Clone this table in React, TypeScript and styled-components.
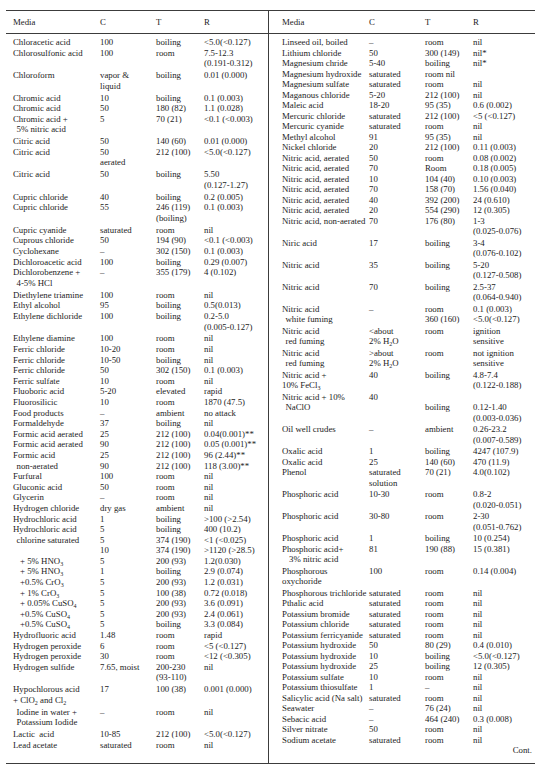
import * as React from "react";
import styled, { createGlobalStyle } from "styled-components";

const GlobalStyle = createGlobalStyle`
  html, body {
    margin: 0;
    padding: 0;
    background: #fff;
  }
  body {
    font-family: "Liberation Serif", "Times New Roman", serif;
    color: #1c1c1c;
  }
`;

type Row = [string, string, string, string];

// "\n" breaks a cell into lines, a leading "~" indents a line, "_3" is a subscript
const leftRows: Row[] = [
  ["Chloracetic acid", "100", "boiling", "<5.0(<0.127)"],
  ["Chlorosulfonic acid", "100", "room", "7.5-12.3\n(0.191-0.312)"],
  ["Chloroform", "vapor &\nliquid", "boiling", "0.01 (0.000)"],
  ["Chromic acid", "10", "boiling", "0.1 (0.003)"],
  ["Chromic acid", "50", "180 (82)", "1.1 (0.028)"],
  ["Chromic acid +\n~5% nitric acid", "5", "70 (21)", "<0.1 (<0.003)"],
  ["Citric acid", "50", "140 (60)", "0.01 (0.000)"],
  ["Citric acid", "50\naerated", "212 (100)", "<5.0(<0.127)"],
  ["Citric acid", "50", "boiling", "5.50\n(0.127-1.27)"],
  ["Cupric chloride", "40", "boiling", "0.2 (0.005)"],
  ["Cupric chloride", "55", "246 (119)\n(boiling)", "0.1 (0.003)"],
  ["Cupric cyanide", "saturated", "room", "nil"],
  ["Cuprous chloride", "50", "194 (90)", "<0.1 (<0.003)"],
  ["Cyclohexane", "–", "302 (150)", "0.1 (0.003)"],
  ["Dichloroacetic acid", "100", "boiling", "0.29 (0.007)"],
  ["Dichlorobenzene +\n~4-5% HCl", "–", "355 (179)", "4 (0.102)"],
  ["Diethylene triamine", "100", "room", "nil"],
  ["Ethyl alcohol", "95", "boiling", "0.5(0.013)"],
  ["Ethylene dichloride", "100", "boiling", "0.2-5.0\n(0.005-0.127)"],
  ["Ethylene diamine", "100", "room", "nil"],
  ["Ferric chloride", "10-20", "room", "nil"],
  ["Ferric chloride", "10-50", "boiling", "nil"],
  ["Ferric chloride", "50", "302 (150)", "0.1 (0.003)"],
  ["Ferric sulfate", "10", "room", "nil"],
  ["Fluoboric acid", "5-20", "elevated", "rapid"],
  ["Fluorosilicic", "10", "room", "1870 (47.5)"],
  ["Food products", "–", "ambient", "no attack"],
  ["Formaldehyde", "37", "boiling", "nil"],
  ["Formic acid aerated", "25", "212 (100)", "0.04(0.001)**"],
  ["Formic acid aerated", "90", "212 (100)", "0.05 (0.001)**"],
  ["Formic acid", "25", "212 (100)", "96 (2.44)**"],
  ["~non-aerated", "90", "212 (100)", "118 (3.00)**"],
  ["Furfural", "100", "room", "nil"],
  ["Gluconic acid", "50", "room", "nil"],
  ["Glycerin", "–", "room", "nil"],
  ["Hydrogen chloride", "dry gas", "ambient", "nil"],
  ["Hydrochloric acid", "1", "boiling", ">100 (>2.54)"],
  ["Hydrochloric acid", "5", "boiling", "400 (10.2)"],
  ["~chlorine saturated", "5", "374 (190)", "<1 (<0.025)"],
  ["", "10", "374 (190)", ">1120 (>28.5)"],
  ["~~+ 5% HNO_3", "5", "200 (93)", "1.2(0.030)"],
  ["~~+ 5% HNO_3", "1", "boiling", "2.9 (0.074)"],
  ["~~+0.5% CrO_3", "5", "200 (93)", "1.2 (0.031)"],
  ["~~+ 1% CrO_3", "5", "100 (38)", "0.72 (0.018)"],
  ["~~+ 0.05% CuSO_4", "5", "200 (93)", "3.6 (0.091)"],
  ["~~+0.5% CuSO_4", "5", "200 (93)", "2.4 (0.061)"],
  ["~~+0.5% CuSO_4", "5", "boiling", "3.3 (0.084)"],
  ["Hydrofluoric acid", "1.48", "room", "rapid"],
  ["Hydrogen peroxide", "6", "room", "<5 (<0.127)"],
  ["Hydrogen peroxide", "30", "room", "<12 (<0.305)"],
  ["Hydrogen sulfide", "7.65, moist", "200-230\n(93-110)", "nil"],
  ["Hypochlorous acid\n+ ClO_2 and Cl_2", "17", "100 (38)", "0.001 (0.000)"],
  ["~Iodine in water +\n~Potassium Iodide", "–", "room", "nil"],
  ["Lactic  acid", "10-85", "212 (100)", "<5.0(<0.127)"],
  ["Lead acetate", "saturated", "room", "nil"],
];

const rightRows: Row[] = [
  ["Linseed oil, boiled", "–", "room", "nil"],
  ["Lithium chloride", "50", "300 (149)", "nil*"],
  ["Magnesium chride", "5-40", "boiling", "nil*"],
  ["Magnesium hydroxide", "saturated", "room nil", ""],
  ["Magnesium sulfate", "saturated", "room", "nil"],
  ["Maganous chloride", "5-20", "212 (100)", "nil"],
  ["Maleic acid", "18-20", "95 (35)", "0.6 (0.002)"],
  ["Mercuric chloride", "saturated", "212 (100)", "<5 (<0.127)"],
  ["Mercuric cyanide", "saturated", "room", "nil"],
  ["Methyl alcohol", "91", "95 (35)", "nil"],
  ["Nickel chloride", "20", "212 (100)", "0.11 (0.003)"],
  ["Nitric acid, aerated", "50", "room", "0.08 (0.002)"],
  ["Nitric acid, aerated", "70", "Room", "0.18 (0.005)"],
  ["Nitric acid, aerated", "10", "104 (40)", "0.10 (0.003)"],
  ["Nitric acid, aerated", "70", "158 (70)", "1.56 (0.040)"],
  ["Nitric acid, aerated", "40", "392 (200)", "24 (0.610)"],
  ["Nitric acid, aerated", "20", "554 (290)", "12 (0.305)"],
  ["Nitric acid, non-aerated", "70", "176 (80)", "1-3\n(0.025-0.076)"],
  ["Niric acid", "17", "boiling", "3-4\n(0.076-0.102)"],
  ["Nitric acid", "35", "boiling", "5-20\n(0.127-0.508)"],
  ["Nitric acid", "70", "boiling", "2.5-37\n(0.064-0.940)"],
  ["Nitric acid\n~white fuming", "–", "room\n360 (160)", "0.1 (0.003)\n<5.0(<0.127)"],
  ["Nitric acid\n~red fuming", "<about\n2% H_2O", "room", "ignition\nsensitive"],
  ["Nitric acid\n~red fuming", ">about\n2% H_2O", "room", "not ignition\nsensitive"],
  ["Nitric acid +\n10% FeCl_3", "40", "boiling", "4.8-7.4\n(0.122-0.188)"],
  ["Nitric acid + 10%\n~NaClO", "40", "\nboiling", "\n0.12-1.40\n(0.003-0.036)"],
  ["Oil well crudes", "–", "ambient", "0.26-23.2\n(0.007-0.589)"],
  ["Oxalic acid", "1", "boiling", "4247 (107.9)"],
  ["Oxalic acid", "25", "140 (60)", "470 (11.9)"],
  ["Phenol", "saturated\nsolution", "70 (21)", "4.0(0.102)"],
  ["Phosphoric acid", "10-30", "room", "0.8-2\n(0.020-0.051)"],
  ["Phosphoric acid", "30-80", "room", "2-30\n(0.051-0.762)"],
  ["Phosphoric acid", "1", "boiling", "10 (0.254)"],
  ["Phosphoric acid+\n~~3% nitric acid", "81", "190 (88)", "15 (0.381)"],
  ["Phosphorous\noxychoride", "100", "room", "0.14 (0.004)"],
  ["Phosphorous trichloride", "saturated", "room", "nil"],
  ["Pthalic acid", "saturated", "room", "nil"],
  ["Potassium bromide", "saturated", "room", "nil"],
  ["Potassium chloride", "saturated", "room", "nil"],
  ["Potassium ferricyanide", "saturated", "room", "nil"],
  ["Potassium hydroxide", "50", "80 (29)", "0.4 (0.010)"],
  ["Potassium hydroxide", "10", "boiling", "<5.0(<0.127)"],
  ["Potassium hydroxide", "25", "boiling", "12 (0.305)"],
  ["Potassium sulfate", "10", "room", "nil"],
  ["Potassium thiosulfate", "1", "–", "nil"],
  ["Salicylic acid (Na salt)", "saturated", "room", "nil"],
  ["Seawater", "–", "76 (24)", "nil"],
  ["Sebacic acid", "–", "464 (240)", "0.3 (0.008)"],
  ["Silver nitrate", "50", "room", "nil"],
  ["Sodium acetate", "saturated", "room", "nil"],
];

const Page = styled.div`
  padding: 10px 2px 0 6px;
`;

const Sheet = styled.div`
  display: grid;
  grid-template-columns: 262px 267px;
  border-top: 1px solid #3c3c3c;
  border-bottom: 1px solid #3c3c3c;
  font-size: 8.8px;
`;

const Panel = styled.section<{ $divider?: boolean; $inset: number; $lh: number }>`
  border-left: ${(p) => (p.$divider ? "1px solid #3c3c3c" : "none")};
  padding-bottom: 8px;

  --inset: ${(p) => p.$inset}px;
  --lh: ${(p) => p.$lh}px;
`;

const Head = styled.div`
  display: grid;
  grid-template-columns: 87px 56px 48px 1fr;
  height: 22px;
  align-items: center;
  padding-left: var(--inset);
  border-bottom: 1px solid #3c3c3c;
  margin-bottom: 3px;
`;

const HeadCell = styled.div`
  line-height: 10px;
`;

const Body = styled.div`
  display: flex;
  flex-direction: column;
`;

const RowLine = styled.div<{ $gap: number }>`
  display: grid;
  grid-template-columns: 87px 56px 48px 1fr;
  padding-left: var(--inset);
  margin-bottom: ${(p) => p.$gap}px;
`;

const Cell = styled.div`
  min-width: 0;
  white-space: pre;
`;

const Line = styled.div<{ $indent: number }>`
  height: var(--lh);
  line-height: var(--lh);
  padding-left: ${(p) => p.$indent * 3.5}px;
`;

const Sub = styled.sub`
  font-size: 6px;
  vertical-align: -2px;
  line-height: 0;
`;

const Cont = styled.div`
  text-align: right;
  line-height: 10px;
  padding-right: 3px;
  margin-top: 0;
`;

const fmt = (s: string) =>
  s.split(/(_\d)/).map((part, i) =>
    part.startsWith("_") ? <Sub key={i}>{part.slice(1)}</Sub> : part,
  );

const CellText = ({ text }: { text: string }) => (
  <Cell>
    {text.split("\n").map((line, i) => {
      const indent = (line.match(/^~*/) || [""])[0].length;
      return (
        <Line key={i} $indent={indent}>
          {fmt(line.slice(indent))}
        </Line>
      );
    })}
  </Cell>
);

const TablePanel = ({
  rows,
  divider,
  inset,
  lineHeight,
  gap,
  children,
}: {
  rows: Row[];
  divider?: boolean;
  inset: number;
  lineHeight: number;
  gap: number;
  children?: React.ReactNode;
}) => (
  <Panel $divider={divider} $inset={inset} $lh={lineHeight}>
    <Head>
      <HeadCell>Media</HeadCell>
      <HeadCell>C</HeadCell>
      <HeadCell>T</HeadCell>
      <HeadCell>R</HeadCell>
    </Head>
    <Body>
      {rows.map((row, i) => {
        const multi = row.some((c) => c.includes("\n"));
        return (
          <RowLine key={i} $gap={multi ? gap : 0}>
            {row.map((c, j) => (
              <CellText key={j} text={c} />
            ))}
          </RowLine>
        );
      })}
    </Body>
    {children}
  </Panel>
);

export default function App() {
  return (
    <>
      <GlobalStyle />
      <Page>
        <Sheet>
          <TablePanel rows={leftRows} inset={7} lineHeight={10.6} gap={1.3} />
          <TablePanel rows={rightRows} divider inset={13} lineHeight={10.5} gap={1}>
            <Cont>Cont.</Cont>
          </TablePanel>
        </Sheet>
      </Page>
    </>
  );
}
